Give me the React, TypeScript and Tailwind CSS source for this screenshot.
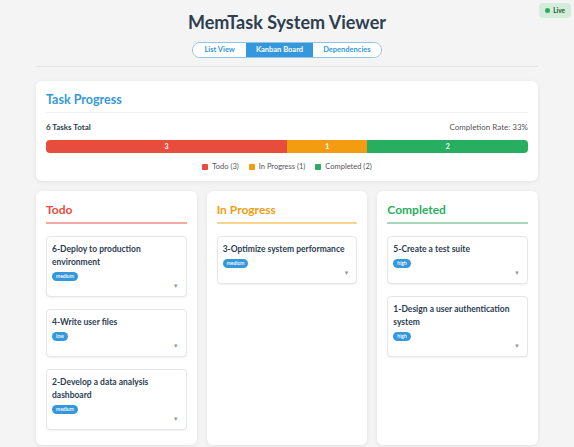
import React from 'react';

type Task = { id: number; title: string; priority: 'low' | 'medium' | 'high' };

const columns: { name: string; color: string; line: string; tasks: Task[] }[] = [
  {
    name: 'Todo',
    color: 'text-[#e74c3c]',
    line: 'border-[#f0aaa2]',
    tasks: [
      { id: 6, title: 'Deploy to production environment', priority: 'medium' },
      { id: 4, title: 'Write user files', priority: 'low' },
      { id: 2, title: 'Develop a data analysis dashboard', priority: 'medium' },
    ],
  },
  {
    name: 'In Progress',
    color: 'text-[#f39c12]',
    line: 'border-[#f7d38f]',
    tasks: [{ id: 3, title: 'Optimize system performance', priority: 'medium' }],
  },
  {
    name: 'Completed',
    color: 'text-[#27ae60]',
    line: 'border-[#a5d8b8]',
    tasks: [
      { id: 5, title: 'Create a test suite', priority: 'high' },
      { id: 1, title: 'Design a user authentication system', priority: 'high' },
    ],
  },
];

const TaskCard: React.FC<{ task: Task }> = ({ task }) => (
  <div className="bg-white border border-[#e6e6e6] rounded-[4px] shadow-[0_1px_2px_rgba(0,0,0,0.06)] px-[5px] pt-[6px] pb-[5px]">
    <h3 className="text-[8.5px] leading-[13px] font-bold text-[#2c3e50]">{task.id}-{task.title}</h3>
    <div className="mt-[3px] flex">
      <span className="bg-[#3498db] text-white text-[5px] leading-[9px] font-semibold rounded-full px-[4px]">{task.priority}</span>
    </div>
    <div className="flex justify-end h-[10px] items-center pr-[2px]">
      <span className="text-[6px] leading-none text-[#999]">▼</span>
    </div>
  </div>
);

export default function App() {
  return (
    <div className="relative h-[447px] overflow-hidden bg-[#f4f4f4] font-['Lato','Liberation_Sans',sans-serif] text-[#2c3e50]">
      <div className="absolute top-[3px] right-[3px] flex items-center gap-[3px] bg-[#d4edda] rounded-[4px] px-[6px] py-[3px]">
        <span className="w-[5px] h-[5px] rounded-full bg-[#27ae60]" />
        <span className="text-[6.5px] leading-[9px] font-bold text-[#155724]">Live</span>
      </div>

      <div className="w-[502px] mx-auto">
        <header className="pt-[10px] pb-[8px] border-b border-[#e3e3e3] flex flex-col items-center">
          <h1 className="text-[18px] leading-[24px] font-bold text-[#2c3e50]">MemTask System Viewer</h1>
          <div className="mt-[8px] flex border border-[#8fc3e8] rounded-full overflow-hidden text-[7.5px] leading-[14px] font-bold">
            <button className="px-[11px] text-[#3498db] bg-white">List View</button>
            <button className="px-[10px] text-white bg-[#3498db]">Kanban Board</button>
            <button className="px-[10px] text-[#3498db] bg-white">Dependencies</button>
          </div>
        </header>

        <section className="mt-[14px] bg-white rounded-[6px] shadow-[0_1px_4px_rgba(0,0,0,0.08)] px-[10px] pt-[10px] pb-[9px]">
          <h2 className="text-[12.5px] leading-[18px] font-bold text-[#3498db] pb-[3px] border-b border-[#eeeeee]">Task Progress</h2>
          <div className="mt-[8px] flex justify-between items-center text-[8px] leading-[12px]">
            <span className="font-bold text-[#2c3e50]">6 Tasks Total</span>
            <span className="text-[#555]">Completion Rate: 33%</span>
          </div>
          <div className="mt-[7px] flex h-[13px] rounded-[4px] overflow-hidden text-white text-[7px] font-bold">
            <div className="w-1/2 bg-[#e74c3c] flex items-center justify-center">3</div>
            <div className="w-1/6 bg-[#f39c12] flex items-center justify-center">1</div>
            <div className="w-1/3 bg-[#27ae60] flex items-center justify-center">2</div>
          </div>
          <div className="mt-[9px] flex justify-center gap-[10px] text-[7.5px] leading-[10px] text-[#555]">
            <span className="flex items-center gap-[4px]"><span className="w-[6px] h-[6px] rounded-[1px] bg-[#e74c3c]" />Todo (3)</span>
            <span className="flex items-center gap-[4px]"><span className="w-[6px] h-[6px] rounded-[1px] bg-[#f39c12]" />In Progress (1)</span>
            <span className="flex items-center gap-[4px]"><span className="w-[6px] h-[6px] rounded-[1px] bg-[#27ae60]" />Completed (2)</span>
          </div>
        </section>

        <div className="mt-[10px] grid grid-cols-3 gap-[10px]">
          {columns.map(col => (
            <div key={col.name} className="bg-white rounded-[6px] shadow-[0_1px_4px_rgba(0,0,0,0.08)] px-[10px] pt-[10px] pb-[15px]">
              <h2 className={`text-[12px] leading-[17px] font-bold pb-[4px] border-b-2 ${col.color} ${col.line}`}>{col.name}</h2>
              <div className="mt-[12px] flex flex-col gap-[12px]">
                {col.tasks.map(t => <TaskCard key={t.id} task={t} />)}
              </div>
            </div>
          ))}
        </div>
      </div>
    </div>
  );
}
